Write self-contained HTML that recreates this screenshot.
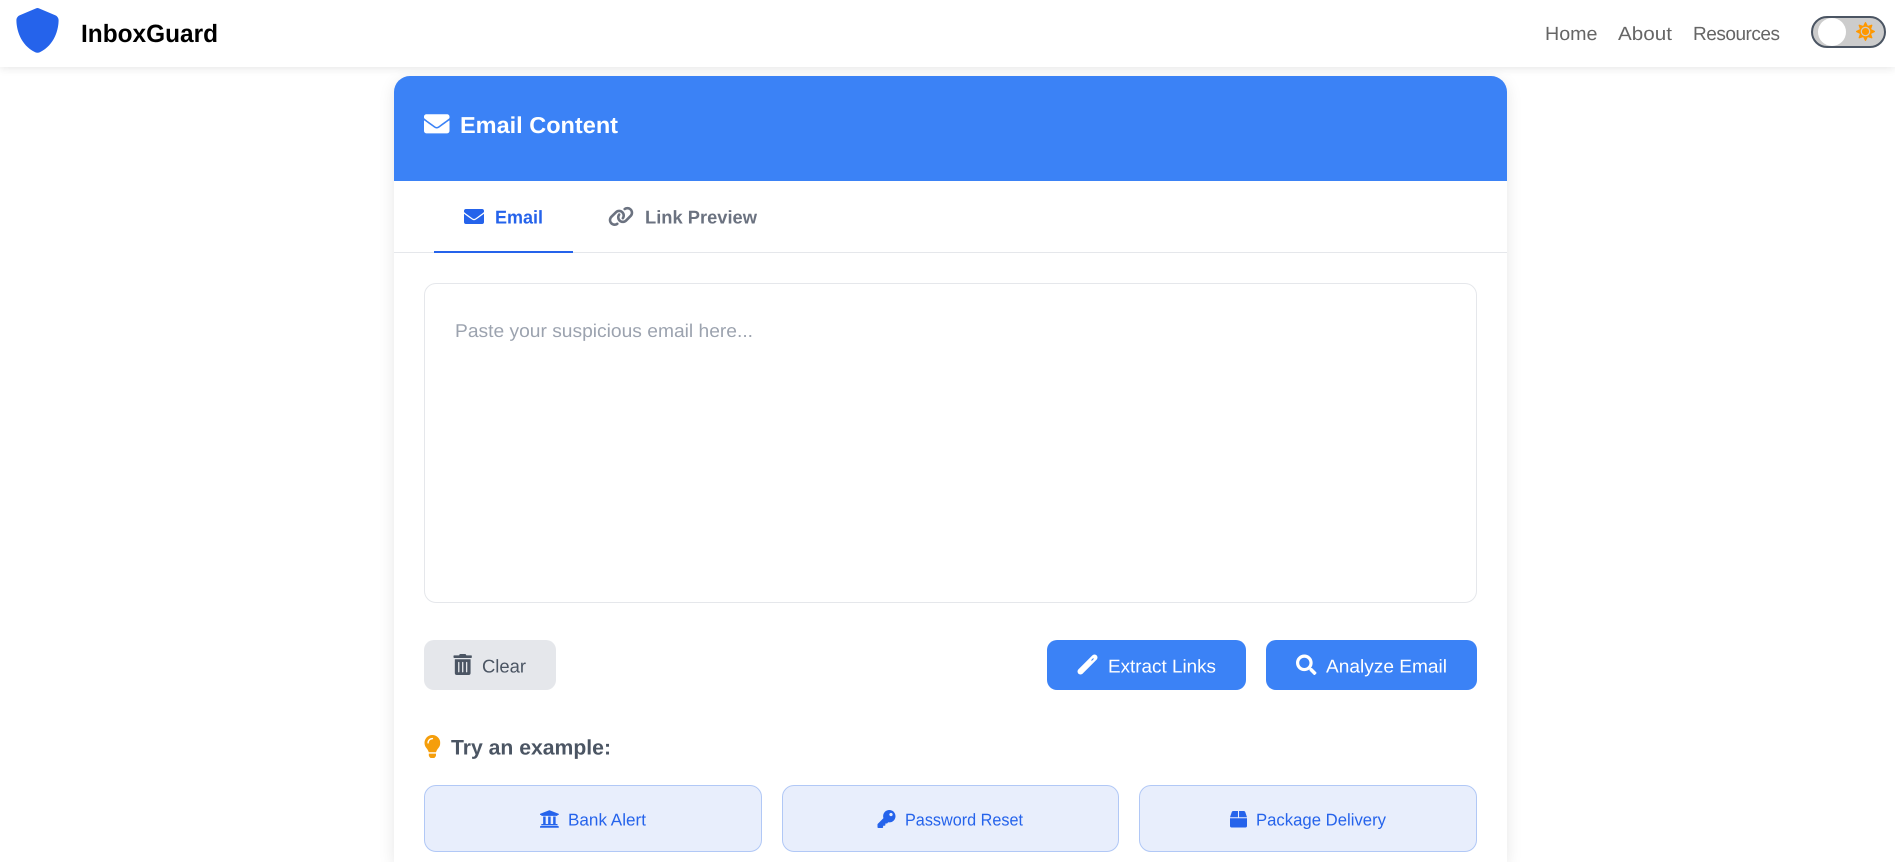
<!DOCTYPE html>
<html lang="en">
<head>
<meta charset="utf-8">
<title>InboxGuard</title>
<style>
html,body{margin:0;padding:0;background:#fff;font-family:"Liberation Sans",Arial,sans-serif}
#page{position:relative;width:1895px;height:862px;overflow:hidden;background:#fff}
.b{position:absolute;box-sizing:border-box}
#nav{left:0;top:0;width:1895px;height:67px;background:#fff;box-shadow:0 2px 8px rgba(0,0,0,.09);z-index:2}
#card{left:394px;top:76px;width:1113px;height:786px;background:#fff;border-radius:16px 16px 0 0;box-shadow:0 4px 16px rgba(0,0,0,.1);overflow:hidden}
#head{left:0;top:0;width:1113px;height:105px;background:#3b82f6}
#line{left:0;top:176px;width:1113px;height:1px;background:#e5e7eb}
#act{left:40px;top:175px;width:139px;height:2px;background:#2563eb}
#ta{left:424px;top:283px;width:1053px;height:320px;border:1px solid #e5e7eb;border-radius:12px;background:#fff}
.btn{top:640px;height:50px;border-radius:10px;background:#3b82f6}
.ex{top:785px;height:67px;background:#e8eefc;border:1.5px solid #b1c8f6;border-radius:12px}
svg#o{position:absolute;left:0;top:0;z-index:3;display:block}
text{font-family:"Liberation Sans",Arial,sans-serif;white-space:pre;text-rendering:geometricPrecision}
.s{font-weight:700}
</style>
</head>
<body>
<div id="page">
<div class="b" id="nav"></div>
<div class="b" id="card">
  <div class="b" id="head"></div>
  <div class="b" id="line"></div>
  <div class="b" id="act"></div>
</div>
<div class="b" id="ta"></div>
<div class="b btn" style="left:424px;width:132px;background:#e5e7eb"></div>
<div class="b btn" style="left:1047px;width:199px"></div>
<div class="b btn" style="left:1266px;width:211px"></div>
<div class="b ex" style="left:424px;width:338px"></div>
<div class="b ex" style="left:782px;width:337px"></div>
<div class="b ex" style="left:1139px;width:338px"></div>

<svg id="o" width="1895" height="862" viewBox="0 0 1895 862" xmlns="http://www.w3.org/2000/svg">
  <defs>
    <path id="env" d="M502.3 190.8c3.9-3.1 9.7-.2 9.7 4.7V400c0 26.5-21.5 48-48 48H48c-26.5 0-48-21.5-48-48V195.6c0-5 5.7-7.8 9.7-4.7 22.4 17.4 52.1 39.5 154.1 113.6 21.1 15.4 56.7 47.8 92.2 47.6 35.7.3 72-32.8 92.3-47.6 102-74.1 131.6-96.3 154-113.7zM256 320c23.2.4 56.6-29.2 73.4-41.4 132.7-96.3 142.8-104.7 173.4-128.7 5.8-4.5 9.2-11.5 9.2-18.9v-19c0-26.5-21.5-48-48-48H48C21.5 64 0 85.5 0 112v19c0 7.4 3.4 14.3 9.2 18.9 30.6 23.9 40.7 32.4 173.4 128.7 16.8 12.2 50.2 41.8 73.4 41.4z"/>
  </defs>

  <!-- navbar -->
  <svg x="14" y="8" width="47" height="45" viewBox="0 0 512 512" preserveAspectRatio="xMidYMid meet"><path fill="#2563eb" d="M256 0c4.6 0 9.2 1 13.4 2.9L457.7 82.8c22 9.3 38.4 31 38.3 57.2c-.5 99.2-41.3 280.7-213.6 363.2c-16.7 8-36.1 8-52.8 0C57.3 420.7 16.5 239.2 16 140c-.1-26.2 16.3-47.9 38.3-57.2L242.7 2.9C246.8 1 251.4 0 256 0z"/></svg>
  <text x="81" y="42" class="s" font-size="25" fill="#000" textLength="137" lengthAdjust="spacingAndGlyphs">InboxGuard</text>
  <text x="1545" y="40" font-size="19" fill="#666" textLength="52.5" lengthAdjust="spacingAndGlyphs">Home</text>
  <text x="1618" y="40" font-size="19" fill="#666" textLength="54" lengthAdjust="spacingAndGlyphs">About</text>
  <text x="1693" y="40" font-size="19" fill="#666" textLength="87" lengthAdjust="spacing">Resources</text>

  <rect x="1812" y="17" width="73" height="30" rx="15" fill="#ccc" stroke="#4b5563" stroke-width="2"/>
  <circle cx="1832" cy="32" r="14" fill="#fff"/>
  <svg x="1856" y="22" width="19" height="19" viewBox="0 0 512 512"><path fill="#ff9800" d="M256 160c-52.9 0-96 43.1-96 96s43.1 96 96 96 96-43.1 96-96-43.1-96-96-96zm246.4 80.5l-94.7-47.3 33.5-100.4c4.5-13.6-8.4-26.5-21.9-21.9l-100.4 33.5-47.4-94.8c-6.4-12.8-24.6-12.8-31 0l-47.3 94.7L92.7 70.8c-13.6-4.5-26.5 8.4-21.9 21.9l33.5 100.4-94.7 47.4c-12.8 6.4-12.8 24.6 0 31l94.7 47.3-33.5 100.5c-4.5 13.6 8.4 26.5 21.9 21.9l100.4-33.5 47.3 94.7c6.4 12.8 24.6 12.8 31 0l47.3-94.7 100.4 33.5c13.6 4.5 26.5-8.4 21.9-21.9l-33.5-100.4 94.7-47.3c13-6.5 13-24.7.2-31.1zm-155.9 106c-49.9 49.9-131.1 49.9-181 0-49.9-49.9-49.9-131.1 0-181 49.9-49.9 131.1-49.9 181 0 49.9 49.9 49.9 131.1 0 181z"/></svg>

  <!-- card header -->
  <svg x="424" y="111" width="25.5" height="25.5" viewBox="0 0 512 512"><use href="#env" fill="#fff"/></svg>
  <text x="460" y="133" class="s" font-size="23" fill="#fff" textLength="158" lengthAdjust="spacingAndGlyphs">Email Content</text>

  <!-- tabs -->
  <svg x="464" y="206.5" width="20" height="20" viewBox="0 0 512 512"><use href="#env" fill="#2563eb"/></svg>
  <text x="495" y="223.5" class="s" font-size="18.5" fill="#2563eb" textLength="48" lengthAdjust="spacingAndGlyphs">Email</text>
  <svg x="608" y="206" width="26" height="20.8" viewBox="0 0 640 512"><path fill="#6b7280" d="M579.8 267.7c56.5-56.5 56.5-148 0-204.5c-50-50-128.8-56.5-186.3-15.4l-1.6 1.1c-14.4 10.3-17.7 30.3-7.4 44.6s30.3 17.7 44.6 7.4l1.6-1.1c32.1-22.9 76-19.3 103.8 8.6c31.5 31.5 31.5 82.5 0 114L422.3 334.8c-31.5 31.5-82.5 31.5-114 0c-27.9-27.9-31.5-71.8-8.6-103.8l1.1-1.6c10.3-14.4 6.9-34.4-7.4-44.6s-34.4-6.9-44.6 7.4l-1.1 1.6C206.5 251.2 213 330 263 380c56.5 56.5 148 56.5 204.5 0L579.8 267.7zM60.2 244.3c-56.5 56.5-56.5 148 0 204.5c50 50 128.8 56.5 186.3 15.4l1.6-1.1c14.4-10.3 17.7-30.3 7.4-44.6s-30.3-17.7-44.6-7.4l-1.6 1.1c-32.1 22.9-76 19.3-103.8-8.6C74 372 74 321 105.5 289.5L217.7 177.2c31.5-31.5 82.5-31.5 114 0c27.9 27.9 31.5 71.8 8.6 103.9l-1.1 1.6c-10.3 14.4-6.9 34.4 7.4 44.6s34.4 6.9 44.6-7.4l1.1-1.6C433.5 260.8 427 182 377 132c-56.5-56.5-148-56.5-204.5 0L60.2 244.3z"/></svg>
  <text x="645" y="223.5" class="s" font-size="18.5" fill="#6b7280" textLength="112" lengthAdjust="spacingAndGlyphs">Link Preview</text>

  <!-- textarea placeholder -->
  <text x="455" y="337" font-size="18.5" fill="#9ca3af" textLength="298" lengthAdjust="spacingAndGlyphs">Paste your suspicious email here...</text>

  <!-- action buttons -->
  <svg x="453.5" y="654" width="18.4" height="21" viewBox="0 0 448 512"><path fill="#4b5563" d="M32 464a48 48 0 0 0 48 48h288a48 48 0 0 0 48-48V128H32zm272-256a16 16 0 0 1 32 0v224a16 16 0 0 1-32 0zm-96 0a16 16 0 0 1 32 0v224a16 16 0 0 1-32 0zm-96 0a16 16 0 0 1 32 0v224a16 16 0 0 1-32 0zM432 32H312l-9.4-18.7A24 24 0 0 0 281.1 0H166.8a23.72 23.72 0 0 0-21.4 13.3L136 32H16A16 16 0 0 0 0 48v32a16 16 0 0 0 16 16h416a16 16 0 0 0 16-16V48a16 16 0 0 0-16-16z"/></svg>
  <text x="482" y="672.5" font-size="18.5" fill="#4b5563" textLength="44" lengthAdjust="spacingAndGlyphs">Clear</text>

  <line x1="1080.5" y1="671.5" x2="1094.5" y2="657.5" stroke="#fff" stroke-width="6" stroke-linecap="round"/>
  <line x1="1091.5" y1="660.5" x2="1093.5" y2="658.5" stroke="#3b82f6" stroke-width="1"/>
  <text x="1108" y="672.5" font-size="18.5" fill="#fff" textLength="108" lengthAdjust="spacingAndGlyphs">Extract Links</text>

  <svg x="1296" y="654.5" width="20.5" height="20.5" viewBox="0 0 512 512"><path fill="#fff" d="M505 442.7L405.3 343c-4.5-4.5-10.6-7-17-7H372c27.6-35.3 44-79.7 44-128C416 93.1 322.9 0 208 0S0 93.1 0 208s93.1 208 208 208c48.3 0 92.7-16.4 128-44v16.3c0 6.4 2.5 12.5 7 17l99.7 99.7c9.4 9.4 24.6 9.4 33.9 0l28.3-28.3c9.4-9.4 9.4-24.6.1-34zM208 336c-70.7 0-128-57.2-128-128 0-70.7 57.2-128 128-128 70.7 0 128 57.2 128 128 0 70.7-57.2 128-128 128z"/></svg>
  <text x="1326" y="672.5" font-size="18.5" fill="#fff" textLength="121" lengthAdjust="spacingAndGlyphs">Analyze Email</text>

  <!-- examples -->
  <svg x="424.5" y="735" width="15.8" height="23" viewBox="0 0 352 512"><path fill="#f59e0b" d="M96.06 454.35c.01 6.29 1.87 12.45 5.36 17.69l17.09 25.69a31.99 31.99 0 0 0 26.64 14.28h61.71a31.99 31.99 0 0 0 26.64-14.28l17.09-25.69a31.989 31.989 0 0 0 5.36-17.69l.04-38.35H96.01l.05 38.35zM0 176c0 44.37 16.45 84.85 43.56 115.78 16.52 18.85 42.36 58.23 52.21 91.45.04.26.07.52.11.78h160.24c.04-.26.07-.51.11-.78 9.85-33.22 35.69-72.6 52.21-91.45C335.55 260.85 352 220.37 352 176 352 78.61 272.91-.3 175.45 0 73.44.31 0 82.97 0 176zm176-80c-44.11 0-80 35.89-80 80 0 8.84-7.16 16-16 16s-16-7.16-16-16c0-61.76 50.24-112 112-112 8.84 0 16 7.16 16 16s-7.16 16-16 16z"/></svg>
  <text x="451" y="754.5" class="s" font-size="21" fill="#4b5563" textLength="160" lengthAdjust="spacingAndGlyphs">Try an example:</text>

  <svg x="539.4" y="809" width="20" height="20" viewBox="0 0 512 512"><path fill="#2563eb" d="M496 128v16a8 8 0 0 1-8 8h-24v12c0 6.627-5.373 12-12 12H60c-6.627 0-12-5.373-12-12v-12H24a8 8 0 0 1-8-8v-16a8 8 0 0 1 4.941-7.392l232-88a7.996 7.996 0 0 1 6.118 0l232 88A8 8 0 0 1 496 128zm-24 304H40c-13.255 0-24 10.745-24 24v16a8 8 0 0 0 8 8h464a8 8 0 0 0 8-8v-16c0-13.255-10.745-24-24-24zM96 192v192H60c-6.627 0-12 5.373-12 12v20h416v-20c0-6.627-5.373-12-12-12h-36V192h-64v192h-64V192h-64v192h-64V192H96z"/></svg>
  <text x="568" y="825.5" font-size="17" fill="#2563eb" textLength="78" lengthAdjust="spacingAndGlyphs">Bank Alert</text>

  <svg x="877.5" y="810" width="18" height="18" viewBox="0 0 512 512"><path fill="#2563eb" d="M512 176.001C512 273.203 433.202 352 336 352c-11.22 0-22.19-1.062-32.827-3.069l-24.012 27.014A23.999 23.999 0 0 1 261.223 384H224v40c0 13.255-10.745 24-24 24h-40v40c0 13.255-10.745 24-24 24H24c-13.255 0-24-10.745-24-24v-78.059c0-6.365 2.529-12.47 7.029-16.971l161.802-161.802C163.108 213.814 160 195.271 160 176 160 78.798 238.797.001 335.999 0 433.488-.001 512 78.511 512 176.001zM336 128c0 26.51 21.49 48 48 48s48-21.49 48-48-21.49-48-48-48-48 21.49-48 48z"/></svg>
  <text x="905" y="825.5" font-size="17" fill="#2563eb" textLength="118" lengthAdjust="spacingAndGlyphs">Password Reset</text>

  <svg x="1230" y="811" width="17" height="16.5" viewBox="0 0 512 512" preserveAspectRatio="none"><path fill="#2563eb" d="M509.5 184.6L458.9 32.8C452.4 13.2 434.1 0 413.4 0H272v192h238.7c-.4-2.5-.4-5-1.2-7.4zM240 0H98.6c-20.7 0-39 13.2-45.5 32.8L2.5 184.6c-.8 2.4-.8 4.9-1.2 7.4H240V0zM0 224v240c0 26.5 21.5 48 48 48h416c26.5 0 48-21.5 48-48V224H0z"/></svg>
  <text x="1256" y="825.5" font-size="17" fill="#2563eb" textLength="130" lengthAdjust="spacingAndGlyphs">Package Delivery</text>
</svg>
</div>
</body>
</html>
